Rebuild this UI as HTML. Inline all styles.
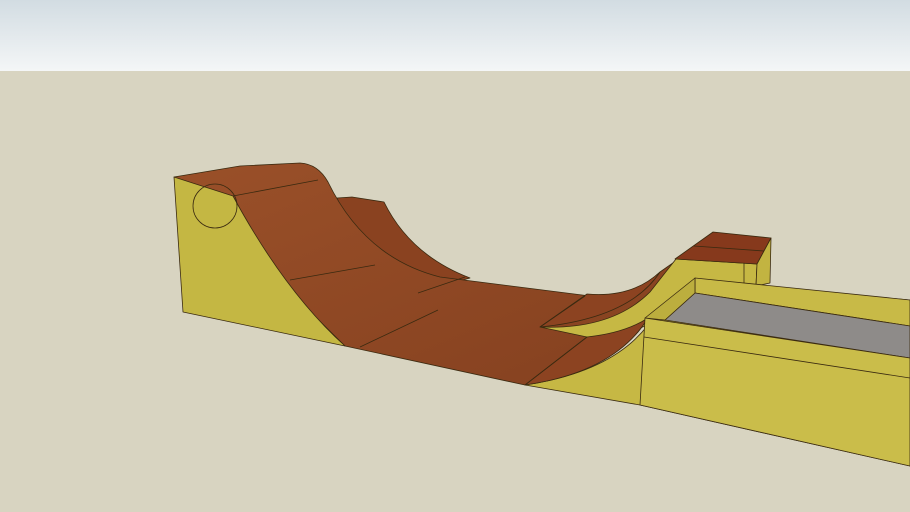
<!DOCTYPE html>
<html><head><style>
html,body{margin:0;padding:0;width:910px;height:512px;overflow:hidden;background:#d8d4c1}
</style></head><body>
<svg width="910" height="512" viewBox="0 0 910 512" xmlns="http://www.w3.org/2000/svg">
<defs>
<linearGradient id="sky" x1="0" y1="0" x2="0" y2="1">
<stop offset="0" stop-color="#d2dce2"/><stop offset="1" stop-color="#f4f6f7"/>
</linearGradient>
<linearGradient id="br" x1="0" y1="0" x2="1" y2="1">
<stop offset="0" stop-color="#9a5029"/><stop offset="1" stop-color="#84401f"/>
</linearGradient>
</defs>
<rect x="0" y="0" width="910" height="71" fill="url(#sky)"/>
<rect x="0" y="71" width="910" height="441" fill="#d8d4c1"/>
<g stroke="#3a2a10" stroke-width="0.8" stroke-linejoin="round">
<!-- back second ramp -->
<path d="M337,198 L352,197 L384,202 Q410,255 470,278 L420,292 Q360,262 340,205 Z" fill="#8a4220"/>
<!-- main brown surface -->
<path d="M174,177 L240,166 L300,163 Q318,164 328,182 Q365,258 440,277 L590,296 Q632,298 660,272 L680,258 L690,300 L648,318 Q615,372 525,385 L345,346 Z" fill="url(#br)"/>
<!-- right yellow structure -->
<path d="M540,327 Q612,330 650,292 L676,259 L757,264 L756,286 L910,300 L910,466 L640,405 L525,385 Q612,372 648,325 Q620,336 587,337 Z" fill="#c6b844"/>
<!-- lower brown lip redraw -->
<path d="M525,385 L587,337 Q625,333 648,318 Q615,372 525,385 Z" fill="#8c4321"/>
<!-- upper brown lip -->
<path d="M540,327 L587,294 Q632,298 660,272 Q630,318 540,327 Z" fill="#8c4321"/>
<!-- left yellow side -->
<path d="M174,177 L233,196 Q285,292 345,346 L183,312 Z" fill="#c4b743"/>
<circle cx="215" cy="206" r="22" fill="none"/>
<!-- deck lines -->
<path d="M233,196 L318,180" fill="none"/>
<path d="M290,280 L375,265" fill="none"/>
<path d="M360,347 L438,310" fill="none"/>
<path d="M418,293 L465,277" fill="none"/>
<path d="M540,327 L585,296" fill="none"/>
<path d="M525,385 L587,337" fill="none"/>
<!-- right platform -->
<path d="M675,259 L713,232 L771,238 L757,264 Z" fill="#86391c"/>
<path d="M694,246 L764,251" fill="none"/>
<path d="M757,264 L771,238 L770,283 L756,286 Z" fill="#c2b441"/>
<path d="M744,263 L744,286" fill="none"/>
<!-- box back wall top region -->
<path d="M695,278 L910,300 L910,326 L695,293 Z" fill="#c8ba47"/>
<!-- grey top -->
<path d="M695,293 L910,326 L910,358 L665,320 Z" fill="#8e8b89"/>
<!-- inner left wall -->
<path d="M645,318 L695,278 L695,293 L665,320 Z" fill="#bcae3e"/>
<!-- front wall -->
<path d="M645,318 L910,358 L910,466 L640,405 Z" fill="#cabd4a"/>
<path d="M644,337 L910,378" fill="none"/>
</g>
</svg>
</body></html>
